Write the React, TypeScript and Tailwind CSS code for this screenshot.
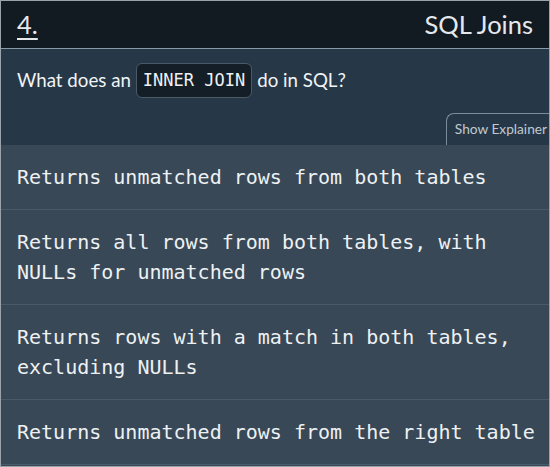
const options = [
  "Returns unmatched rows from both tables",
  "Returns all rows from both tables, with NULLs for unmatched rows",
  "Returns rows with a match in both tables, excluding NULLs",
  "Returns unmatched rows from the right table",
];

const sans = { fontFamily: "Lato, 'Noto Sans', sans-serif" };

export default function App() {
  return (
    <div className="flex h-[467px] w-[550px] flex-col overflow-hidden border border-[#9aa3aa] bg-[#384856]">
      <header
        className="flex h-[48px] shrink-0 items-center justify-between border-b border-[#8c9aa5] bg-[#121a22] pl-4 pr-[16px] text-[25.5px] text-[#e6e9ec]"
        style={sans}
      >
        <span className="underline decoration-2 underline-offset-4">4.</span>
        <span>SQL Joins</span>
      </header>

      <section className="flex shrink-0 flex-col bg-[#263847] pt-[14px]">
        <div className="flex items-center gap-[5px] px-4 text-[18.7px] text-[#f1f3f5]" style={sans}>
          <span>What does an</span>
          <code className="flex h-[35px] items-center rounded-md border border-[#4b5a66] bg-[#141e27] px-[6px] font-['DejaVu_Sans_Mono',monospace] text-[17px] text-[#eef1f3]">
            INNER JOIN
          </code>
          <span>do in SQL?</span>
        </div>
        <div className="mt-[15px] flex justify-end">
          <button
            className="-mr-[4px] h-[32px] rounded-tl-lg border-l border-t border-[#7d8c98] pl-[8px] pr-[6px] text-[13.7px] text-[#c0c9d0]"
            style={sans}
          >
            Show Explainer
          </button>
        </div>
      </section>

      <ul className="flex flex-col">
        {options.map((o) => (
          <li
            key={o}
            className="border-b border-[#495a68] py-[17px] pl-4 pr-1 font-['DejaVu_Sans_Mono',monospace] text-[20px] leading-[30px] text-[#eef1f3]"
          >
            {o}
          </li>
        ))}
      </ul>
    </div>
  );
}
